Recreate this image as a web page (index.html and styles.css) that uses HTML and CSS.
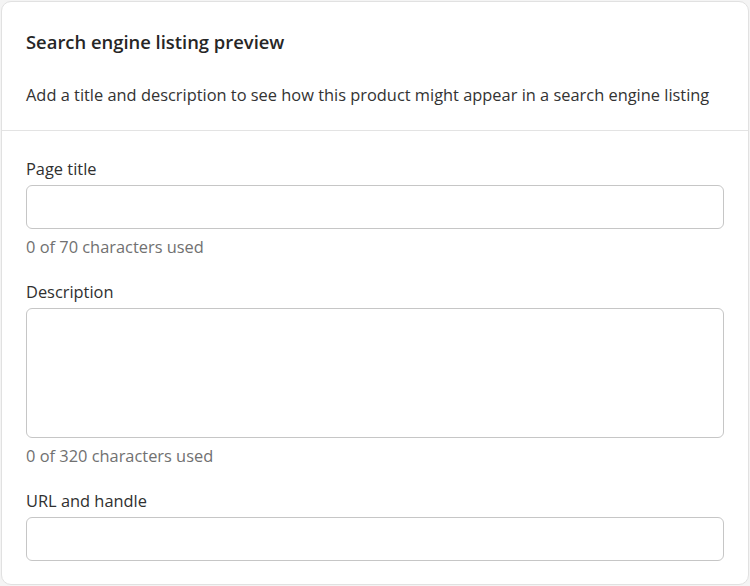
FILE: index.html
```html
<!DOCTYPE html>
<html lang="en">
<head>
<meta charset="utf-8">
<title>Search engine listing preview</title>
<link rel="stylesheet" href="styles.css">
</head>
<body>
<div class="page">
  <section class="card">
    <header class="card-head">
      <h2 class="card-title">Search engine listing preview</h2>
      <p class="card-desc">Add a title and description to see how this product might appear in a search engine listing</p>
    </header>
    <div class="card-body">
      <div class="field">
        <label class="label" for="pt">Page title</label>
        <input class="input" id="pt" type="text">
        <div class="help">0 of 70 characters used</div>
      </div>
      <div class="field">
        <label class="label" for="ds">Description</label>
        <textarea class="input textarea" id="ds"></textarea>
        <div class="help">0 of 320 characters used</div>
      </div>
      <div class="field">
        <label class="label" for="url">URL and handle</label>
        <input class="input" id="url" type="text">
      </div>
    </div>
  </section>
</div>
</body>
</html>
```
FILE: styles.css
```css
* { box-sizing: border-box; }
html, body { margin: 0; padding: 0; }
body {
  background: #f4f4f4;
  font-family: "Open Sans", "Noto Sans", sans-serif;
  color: #303030;
}
.page { padding: 1px; }
.card {
  background: #fff;
  border: 1px solid #e1e1e1;
  border-radius: 10px;
  height: 584px;
}
.card-head {
  padding: 28px 24px 23px;
  border-bottom: 1px solid #e3e3e3;
}
.card-title {
  margin: 0;
  font-size: 18.4px;
  line-height: 24px;
  font-weight: 600;
  color: #262626;
}
.card-desc {
  margin: 29px 0 0;
  font-size: 16.4px;
  line-height: 24px;
  color: #333;
  white-space: nowrap;
}
.card-body {
  padding: 26px 24px 0;
  display: flex;
  flex-direction: column;
  gap: 21px;
}
.field { display: flex; flex-direction: column; }
.label {
  font-size: 16.4px;
  line-height: 24px;
  color: #303030;
  margin-bottom: 4px;
}
.input {
  display: block;
  width: 100%;
  height: 44px;
  border: 1px solid #c6c6c6;
  border-radius: 6px;
  background: #fff;
  font: inherit;
  padding: 0 12px;
}
.textarea { height: 130px; resize: none; }
.help {
  margin-top: 6px;
  font-size: 16.4px;
  line-height: 24px;
  color: #717171;
}
```
